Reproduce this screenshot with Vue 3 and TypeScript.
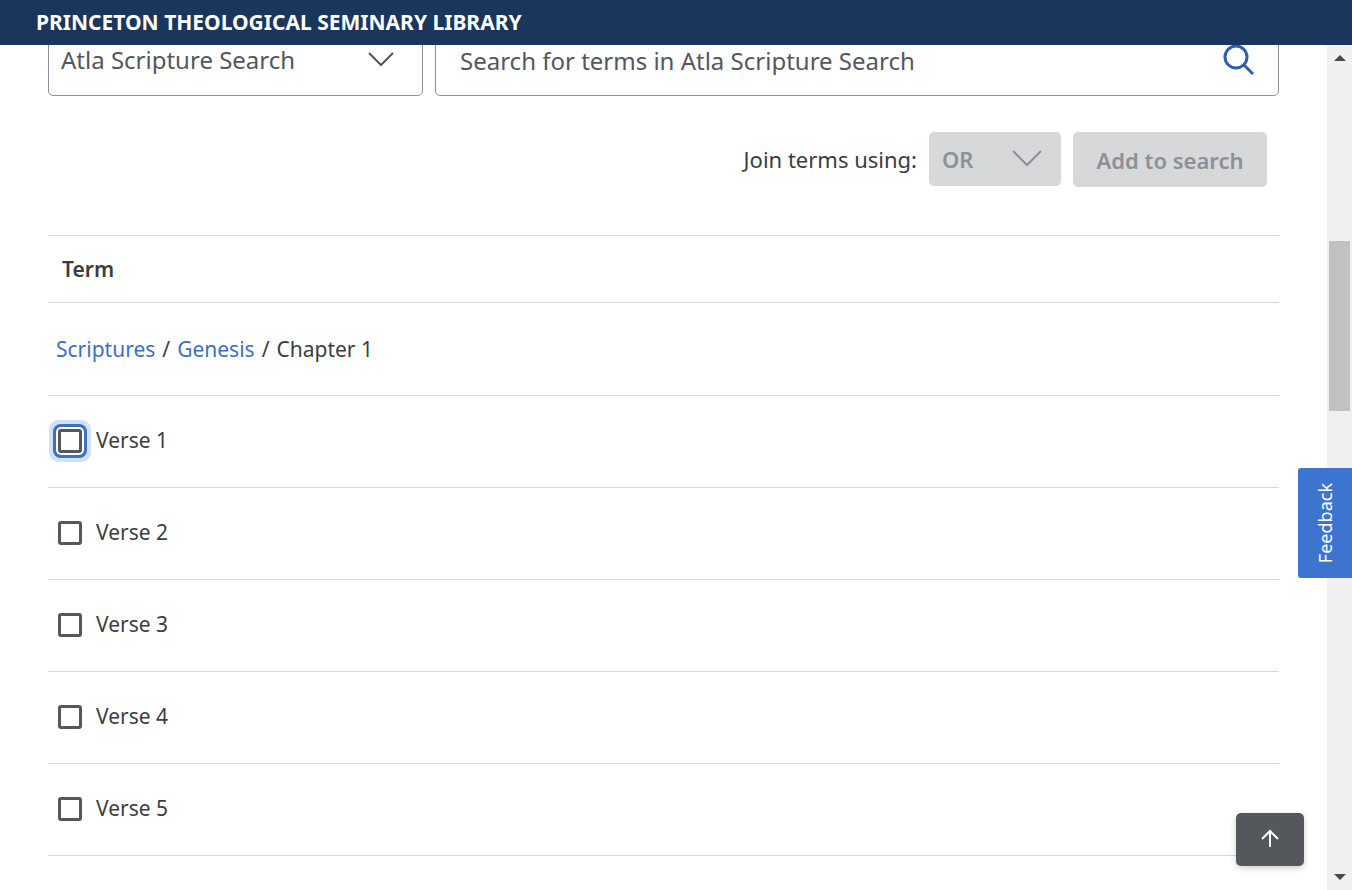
<script setup lang="ts">
import { ref } from 'vue'

interface Verse {
  id: string
  label: string
  checked: boolean
  highlighted: boolean
}

const source = ref('scripture')
const query = ref('')
const operator = ref('or')
const verses = ref<Verse[]>(
  [1, 2, 3, 4, 5].map((n) => ({
    id: `verse-${n}`,
    label: `Verse ${n}`,
    checked: false,
    highlighted: n === 1,
  })),
)
</script>

<template>
  <div class="page">
    <header class="banner">PRINCETON THEOLOGICAL SEMINARY LIBRARY</header>
    <div class="viewport">
      <main class="content">
        <form class="search-row" @submit.prevent>
          <div class="picker source">
            <select v-model="source" aria-label="Authority">
              <option value="scripture">Atla Scripture Search</option>
            </select>
            <svg class="chevron" width="28" height="20" viewBox="0 0 28 20" aria-hidden="true">
              <path d="M2 2 L14 14 L26 2" />
            </svg>
          </div>
          <div class="query">
            <input v-model="query" type="text" aria-label="Search terms" placeholder="Search for terms in Atla Scripture Search" />
            <button type="submit" class="search-button" aria-label="Search">
              <svg width="32" height="32" viewBox="0 0 32 32" aria-hidden="true">
                <circle cx="14" cy="12" r="11" />
                <path d="M22 20 L31 29" />
              </svg>
            </button>
          </div>
        </form>

        <div class="join-row">
          <label for="operator">Join terms using:</label>
          <div class="picker operator">
            <select id="operator" v-model="operator" disabled>
              <option value="or">OR</option>
            </select>
            <svg class="chevron" width="30" height="20" viewBox="0 0 30 20" aria-hidden="true">
              <path d="M1 2 L15 16 L29 2" />
            </svg>
          </div>
          <button type="button" class="add" disabled>Add to search</button>
        </div>

        <section class="terms">
          <h2 class="heading">Term</h2>
          <nav class="crumbs" aria-label="Breadcrumb">
            <a href="#scriptures">Scriptures</a>
            <span class="slash">/</span>
            <a href="#genesis">Genesis</a>
            <span class="slash">/</span>
            <span class="current">Chapter 1</span>
          </nav>
          <ul class="verses">
            <li v-for="verse in verses" :key="verse.id">
              <input :id="verse.id" v-model="verse.checked" type="checkbox" :class="{ highlighted: verse.highlighted }" />
              <label :for="verse.id">{{ verse.label }}</label>
            </li>
          </ul>
        </section>
      </main>
      <div class="scrollbar" aria-hidden="true">
        <svg width="12" height="6" viewBox="0 0 12 6"><path d="M0 6 L6 0 L12 6 Z" /></svg>
        <div class="track"><div class="thumb"></div></div>
        <svg width="12" height="6" viewBox="0 0 12 6"><path d="M0 0 L6 6 L12 0 Z" /></svg>
      </div>
    </div>
    <button type="button" class="feedback"><span>Feedback</span></button>
    <button type="button" class="to-top" aria-label="Back to top">
      <svg width="20" height="22" viewBox="0 0 20 22" aria-hidden="true">
        <path d="M10 18 V2 M2 10 L10 2 L18 10" />
      </svg>
    </button>
  </div>
</template>

<style>
body {
  margin: 0;
  background: #fff;
}
</style>

<style scoped>
* {
  box-sizing: border-box;
}
.page {
  display: flex;
  flex-direction: column;
  height: 100vh;
  overflow: hidden;
  font-family: "Noto Sans", sans-serif;
  font-size: 21px;
  line-height: 28px;
  color: #3b3d40;
}
.banner {
  position: relative;
  z-index: 1;
  flex: none;
  height: 45px;
  padding-left: 36px;
  background: #1a365d;
  color: #fff;
  font-size: 21px;
  font-weight: 700;
  line-height: 44px;
}
.viewport {
  display: flex;
  flex: 1;
  min-height: 0;
}
.content {
  flex: 1;
  min-width: 0;
  padding: 0 48px;
  overflow: hidden;
}
select,
input,
button {
  margin: 0;
  font: inherit;
}
.search-row {
  display: grid;
  grid-template-columns: minmax(0, 375fr) minmax(0, 844fr);
  gap: 12px;
  height: 71px;
  margin-top: -20px;
}
.picker {
  display: grid;
  align-items: center;
}
.picker select,
.chevron {
  grid-area: 1 / 1;
}
.picker select {
  width: 100%;
  height: 100%;
  appearance: none;
  border: 0;
  background: transparent;
  opacity: 1;
}
.chevron {
  justify-self: end;
  pointer-events: none;
  fill: none;
  stroke: #54575c;
  stroke-width: 2;
}
.source {
  border: 1px solid #8d9096;
  border-radius: 5px;
}
.source select {
  padding: 0 48px 2px 12px;
  color: #54575c;
  font-size: 24px;
}
.source .chevron {
  margin-right: 27px;
}
.query {
  display: flex;
  align-items: center;
  padding: 0 24px;
  border: 1px solid #8d9096;
  border-radius: 5px;
}
.query input {
  flex: 1;
  min-width: 0;
  padding: 0;
  border: 0;
  outline: 0;
  background: transparent;
  color: #3b3d40;
  font-size: 24px;
}
.query input::placeholder {
  color: #54575c;
  opacity: 1;
}
.search-button {
  display: flex;
  padding: 0;
  border: 0;
  background: transparent;
}
.search-button svg {
  fill: none;
  stroke: #2f5dab;
  stroke-width: 3;
}
.join-row {
  display: flex;
  align-items: flex-start;
  justify-content: flex-end;
  gap: 12px;
  margin: 36px 12px 0 0;
  font-size: 22px;
}
.join-row label {
  line-height: 54px;
}
.operator {
  width: 132px;
  height: 54px;
  border-radius: 5px;
  background: #d7d8da;
}
.operator select {
  padding: 0 48px 0 13px;
  color: #8d9096;
  font-weight: 600;
}
.operator .chevron {
  margin-right: 19px;
  stroke: #8d9096;
}
.add {
  width: 194px;
  height: 55px;
  padding: 0;
  border: 0;
  border-radius: 5px;
  background: #d7d8da;
  color: #8d9096;
  font-weight: 600;
}
.terms {
  margin-top: 48px;
  border-top: 1px solid #d5d7da;
}
.heading {
  height: 67px;
  margin: 0;
  padding: 19px 14px;
  border-bottom: 1px solid #d5d7da;
  font-size: 21px;
  font-weight: 600;
  line-height: 28px;
}
.crumbs {
  display: flex;
  align-items: center;
  height: 93px;
  padding-left: 8px;
  border-bottom: 1px solid #d5d7da;
}
.crumbs a {
  color: #3f6fbd;
  text-decoration: none;
}
.slash {
  margin: 0 7px;
}
.verses {
  margin: 0;
  padding: 0;
  list-style: none;
}
.verses li {
  display: flex;
  align-items: center;
  height: 92px;
  padding: 0 0 1px 10px;
  border-bottom: 1px solid #d5d7da;
}
.verses input {
  width: 24px;
  height: 24px;
  appearance: none;
  border: 3px solid #54575c;
  border-radius: 3px;
  background: #fff;
}
.verses input:checked {
  background: #54575c;
}
.verses input.highlighted {
  box-shadow: 0 0 0 2px #fff, 0 0 0 5px #3f6fbd, 0 0 0 9px #d3e1f6;
}
.verses label {
  padding: 0 0 3px 14px;
}
.scrollbar {
  display: flex;
  flex: none;
  flex-direction: column;
  align-items: center;
  width: 25px;
  padding: 10px 0;
  background: #f0f0f0;
  fill: #48494b;
}
.track {
  flex: 1;
  align-self: stretch;
  padding: 180px 2px 0;
}
.thumb {
  height: 170px;
  background: #c1c1c1;
}
.feedback {
  position: fixed;
  z-index: 2;
  top: 468px;
  right: 0;
  display: flex;
  align-items: center;
  justify-content: center;
  width: 54px;
  height: 110px;
  padding: 0;
  border: 0;
  border-radius: 3px 0 0 3px;
  background: #3d74cf;
  color: #fff;
  font-size: 18px;
}
.feedback span {
  writing-mode: vertical-rl;
  transform: rotate(180deg);
}
.to-top {
  position: fixed;
  z-index: 2;
  right: 48px;
  bottom: 24px;
  display: flex;
  align-items: center;
  justify-content: center;
  width: 68px;
  height: 53px;
  padding: 0;
  border: 0;
  border-radius: 5px;
  background: #54575c;
  box-shadow: 0 2px 6px rgba(0, 0, 0, 0.2);
}
.to-top svg {
  fill: none;
  stroke: #fff;
  stroke-width: 2;
}
</style>
